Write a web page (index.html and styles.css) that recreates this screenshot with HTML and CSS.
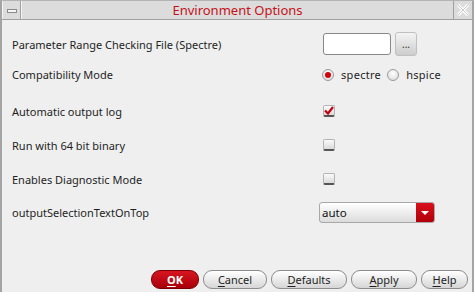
FILE: index.html
```html
<!doctype html>
<html lang="en">

<head>
  <meta charset="UTF-8" />
  <title>Environment Options</title>
  <link rel="stylesheet" href="styles.css">
</head>

<body>
  <div class="window">
    <div class="titlebar">
      <div class="tb-button"><span class="minimize"></span></div>
      <div class="title">Environment Options</div>
      <div class="tb-button close">
        <svg width="12" height="12" viewBox="0 0 12 12">
          <path d="M1 1 L11 11 M11 1 L1 11" stroke="#fff" stroke-width="3" />
          <path d="M1 1 L11 11 M11 1 L1 11" stroke="#c8c8c8" stroke-width="1" />
        </svg>
      </div>
    </div>

    <div class="content">
      <div class="row row-1">
        <label class="label">Parameter Range Checking File (Spectre)</label>
        <div class="control control-file">
          <input type="text" class="text-field" />
          <button type="button" class="browse-button">...</button>
        </div>
      </div>

      <div class="row row-2">
        <label class="label">Compatibility Mode</label>
        <div class="control control-radio">
          <span class="radio checked"></span>
          <span class="radio-text">spectre</span>
          <span class="radio"></span>
          <span class="radio-text">hspice</span>
        </div>
      </div>

      <div class="row row-3">
        <label class="label">Automatic output log</label>
        <div class="control control-check">
          <span class="checkbox checked">
            <svg width="10" height="9" viewBox="0 0 10 9">
              <path d="M1 4.5 L4 7.5 L9 1" fill="none" stroke="#c40010" stroke-width="2.2" />
            </svg>
          </span>
        </div>
      </div>

      <div class="row row-4">
        <label class="label">Run with 64 bit binary</label>
        <div class="control control-check"><span class="checkbox"></span></div>
      </div>

      <div class="row row-5">
        <label class="label">Enables Diagnostic Mode</label>
        <div class="control control-check"><span class="checkbox"></span></div>
      </div>

      <div class="row row-6">
        <label class="label">outputSelectionTextOnTop</label>
        <div class="control">
          <div class="combo">
            <span class="combo-text">auto</span>
            <span class="combo-arrow"></span>
          </div>
        </div>
      </div>
    </div>

    <div class="footer">
      <button type="button" class="btn btn-ok"><u>O</u>K</button>
      <button type="button" class="btn btn-cancel"><u>C</u>ancel</button>
      <button type="button" class="btn btn-defaults"><u>D</u>efaults</button>
      <button type="button" class="btn btn-apply"><u>A</u>pply</button>
      <button type="button" class="btn btn-help"><u>H</u>elp</button>
    </div>
  </div>
</body>

</html>
```

FILE: styles.css
```css
* {
  margin: 0;
  padding: 0;
  box-sizing: border-box;
}

html,
body {
  width: 100%;
  height: 100%;
}

body {
  font-family: 'Noto Sans', 'Open Sans', sans-serif;
  font-size: 11px;
  color: #1a1a1a;
  background-color: #efefef;
}

.window {
  height: 100vh;
  display: flex;
  flex-direction: column;
  border-left: 2px solid #a4a4a4;
  border-right: 2px solid #a4a4a4;
  border-top: 1px solid #b4b4b4;
  background-color: #efefef;
}

/* title bar */
.titlebar {
  height: 19px;
  display: flex;
  background-color: #dcdcdc;
  border-bottom: 1px solid #a0a0a0;
}

.tb-button {
  width: 19px;
  display: flex;
  align-items: center;
  justify-content: center;
  border-right: 1px solid #a0a0a0;
  border-left: 1px solid #f4f4f4;
}

.tb-button.close {
  border-right: none;
  border-left: 1px solid #a0a0a0;
}

.minimize {
  width: 10px;
  height: 4px;
  margin-top: 2px;
  border: 1px solid #8c8c8c;
  background-color: #f6f6f6;
}

.title {
  flex: 1;
  text-align: center;
  color: #c4121a;
  font-size: 13px;
  line-height: 18px;
  border-left: 1px solid #f4f4f4;
}

/* form rows */
.content {
  flex: 1;
  padding: 9px 0 0 10px;
}

.row {
  display: grid;
  grid-template-columns: 307px 1fr;
  align-items: center;
}

.row-1 {
  height: 30px;
}

.row-2 {
  height: 31px;
}

.row-3 {
  height: 38px;
  padding-top: 4px;
}

.row-4 {
  height: 34px;
}

.row-5 {
  height: 34px;
}

.row-6 {
  height: 33px;
}

.label {
  white-space: nowrap;
  color: #1e1e1e;
}

.control {
  display: flex;
  align-items: center;
}

.control-file {
  padding-left: 4px;
  gap: 4px;
}

.text-field {
  width: 68px;
  height: 22px;
  border: 1px solid #888;
  border-radius: 3px;
  background-color: #fff;
  outline: none;
}

.browse-button {
  width: 22px;
  height: 24px;
  border: 1px solid #c0c0c0;
  border-radius: 3px;
  background: linear-gradient(#f4f4f4, #cdcdcd);
  font-family: inherit;
  font-size: 10px;
  color: #333;
  line-height: 1;
}

.control-radio {
  padding-left: 3px;
}

.radio {
  width: 12px;
  height: 12px;
  border-radius: 50%;
  border: 1px solid #9a9a9a;
  background: radial-gradient(circle at 50% 35%, #ffffff, #d8d8d8);
  display: flex;
  align-items: center;
  justify-content: center;
}

.radio.checked::after {
  content: "";
  width: 6px;
  height: 6px;
  border-radius: 50%;
  background-color: #d0000c;
}

.radio-text {
  margin: 0 6px 0 7px;
  color: #1e1e1e;
  letter-spacing: 0.3px;
}

.control-check {
  padding-left: 4px;
}

.checkbox {
  width: 12px;
  height: 12px;
  border: 1px solid #b4b4b4;
  border-bottom: 2px solid #555;
  border-radius: 2px;
  background: linear-gradient(#fafafa, #dadada);
  display: flex;
  align-items: center;
  justify-content: center;
}

.combo {
  width: 116px;
  height: 21px;
  display: flex;
  border: 1px solid #a8a8a8;
  border-radius: 3px;
  background: linear-gradient(#ffffff, #dcdcdc);
  overflow: hidden;
}

.combo-text {
  flex: 1;
  padding-left: 2px;
  font-size: 11.5px;
  line-height: 19px;
  color: #111;
}

.combo-arrow {
  width: 18px;
  display: flex;
  align-items: center;
  justify-content: center;
  background: linear-gradient(#d8101c, #b0000a);
}

.combo-arrow::before {
  content: "";
  border-left: 4px solid transparent;
  border-right: 4px solid transparent;
  border-top: 4px solid #fff;
}

/* buttons */
.footer {
  display: flex;
  justify-content: flex-end;
  gap: 4px;
  padding: 0 4px 3px 0;
}

.btn {
  height: 19px;
  border: 1px solid #8c8c8c;
  border-radius: 9px;
  background: linear-gradient(#ffffff, #d6d6d6);
  font-family: inherit;
  font-size: 11px;
  color: #1e1e1e;
  line-height: 1;
}

.btn u {
  text-underline-offset: 2px;
}

.btn-ok {
  width: 48px;
  border-color: #7a0000;
  background: linear-gradient(#d81520, #a8000a);
  color: #fff;
  font-weight: bold;
}

.btn-cancel {
  width: 64px;
}

.btn-defaults {
  width: 76px;
}

.btn-apply {
  width: 66px;
}

.btn-help {
  width: 47px;
}
```
